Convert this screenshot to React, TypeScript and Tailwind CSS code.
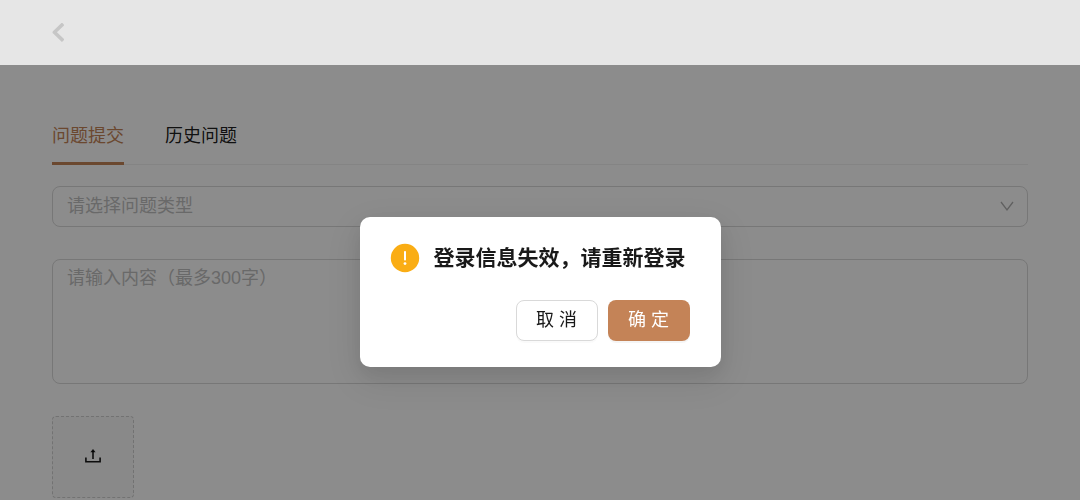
import { useState } from "react";

const tabs = ["问题提交", "历史问题"];

export default function App() {
  const [activeTab, setActiveTab] = useState(0);
  const [open, setOpen] = useState(true);

  return (
    <div className="min-h-screen bg-white text-lg text-black/90 font-['Liberation_Sans','Noto_Sans_CJK_SC',sans-serif]">
      {/* HEADER */}
      <header className="flex h-[65px] items-center bg-[#e6e6e6] px-[52px]">
        <button type="button" aria-label="返回" className="text-[#c6c6c6]">
          <svg
            className="h-5 w-3"
            viewBox="0 0 12 20"
            fill="none"
            stroke="currentColor"
            strokeWidth="3.6"
            strokeLinejoin="round"
          >
            <path d="M11.2 .8 2.4 9.2l8.8 8.6" />
          </svg>
        </button>
      </header>

      {/* MAIN */}
      <main className="px-[52px] pt-12">
        <nav className="flex gap-[41px] border-b border-[#f0f0f0]">
          {tabs.map((tab, index) => (
            <button
              key={tab}
              type="button"
              onClick={() => setActiveTab(index)}
              className={
                index === activeTab
                  ? "-mb-px h-[52px] border-b-3 border-[#c48357] pt-1 pb-2 leading-9 text-[#c48357]"
                  : "-mb-px h-[52px] border-b-3 border-transparent pt-1 pb-2 leading-9"
              }
            >
              {tab}
            </button>
          ))}
        </nav>

        <form className="flex flex-col items-start pt-[21px]">
          <div className="relative w-full">
            <select
              aria-label="问题类型"
              defaultValue=""
              className="block h-[41px] w-full appearance-none rounded-lg border border-[#d9d9d9] bg-white px-3.5 pb-0.5 text-[#bfbfbf]"
            >
              <option value="">请选择问题类型</option>
            </select>
            <svg
              className="pointer-events-none absolute top-3.5 right-3.5 h-3.5 w-3.5"
              viewBox="0 0 14 14"
              fill="none"
              stroke="#b0b0b0"
              strokeWidth="1.3"
            >
              <path d="m1 2 6 8 6-8" />
            </svg>
          </div>

          <textarea
            aria-label="内容"
            placeholder="请输入内容（最多300字）"
            className="mt-8 block h-[125px] w-full resize-none rounded-lg border border-[#d9d9d9] bg-white px-3.5 py-1 leading-7 placeholder:text-[#bfbfbf]"
          />

          <button
            type="button"
            aria-label="上传"
            className="mt-8 flex h-[82px] w-[82px] items-center justify-center rounded border border-dashed border-[#d0d0d0] bg-[#fafafa]"
          >
            <svg
              className="h-4 w-4"
              viewBox="0 0 16 16"
              fill="none"
              stroke="currentColor"
              strokeWidth="1.6"
            >
              <path d="M.9 8.6v4.2h14.2V8.6M8 10V2" />
              <path d="M5.4 3.2 8 0l2.6 3.2Z" fill="currentColor" stroke="none" />
            </svg>
          </button>
        </form>
      </main>

      {/* DIALOG */}
      {open && (
        <div className="fixed inset-x-0 top-[65px] bottom-0 flex items-start justify-center bg-black/45 pt-[152px]">
          <div
            role="dialog"
            aria-modal="true"
            aria-labelledby="dialog-title"
            className="w-[361px] rounded-[10px] bg-white pt-[25px] pr-[31px] pb-[26px] pl-[30px] shadow-[0_8px_20px_rgba(0,0,0,0.08),0_12px_36px_8px_rgba(0,0,0,0.08)]"
          >
            <div className="flex items-center gap-3.5">
              <svg
                className="h-[30px] w-[30px] shrink-0"
                viewBox="0 0 30 30"
              >
                <circle cx="15" cy="15" r="14.2" fill="#faad14" />
                <rect x="14" y="8" width="2" height="9.5" rx="0.8" fill="#fff" />
                <circle cx="15" cy="20.6" r="1.4" fill="#fff" />
              </svg>
              <h1
                id="dialog-title"
                className="text-[21px] leading-8 font-semibold whitespace-nowrap"
              >
                登录信息失效，请重新登录
              </h1>
            </div>
            <div className="mt-[26px] flex justify-end gap-2.5">
              <button
                type="button"
                onClick={() => setOpen(false)}
                className="h-[41px] w-[82px] rounded-lg border border-[#d9d9d9] bg-white pb-0.5 shadow-[0_2px_0_rgba(0,0,0,0.02)]"
              >
                取 消
              </button>
              <button
                type="button"
                onClick={() => setOpen(false)}
                className="h-[41px] w-[82px] rounded-lg bg-[#c48357] pb-0.5 text-white shadow-[0_2px_0_rgba(0,0,0,0.04)]"
              >
                确 定
              </button>
            </div>
          </div>
        </div>
      )}
    </div>
  );
}
